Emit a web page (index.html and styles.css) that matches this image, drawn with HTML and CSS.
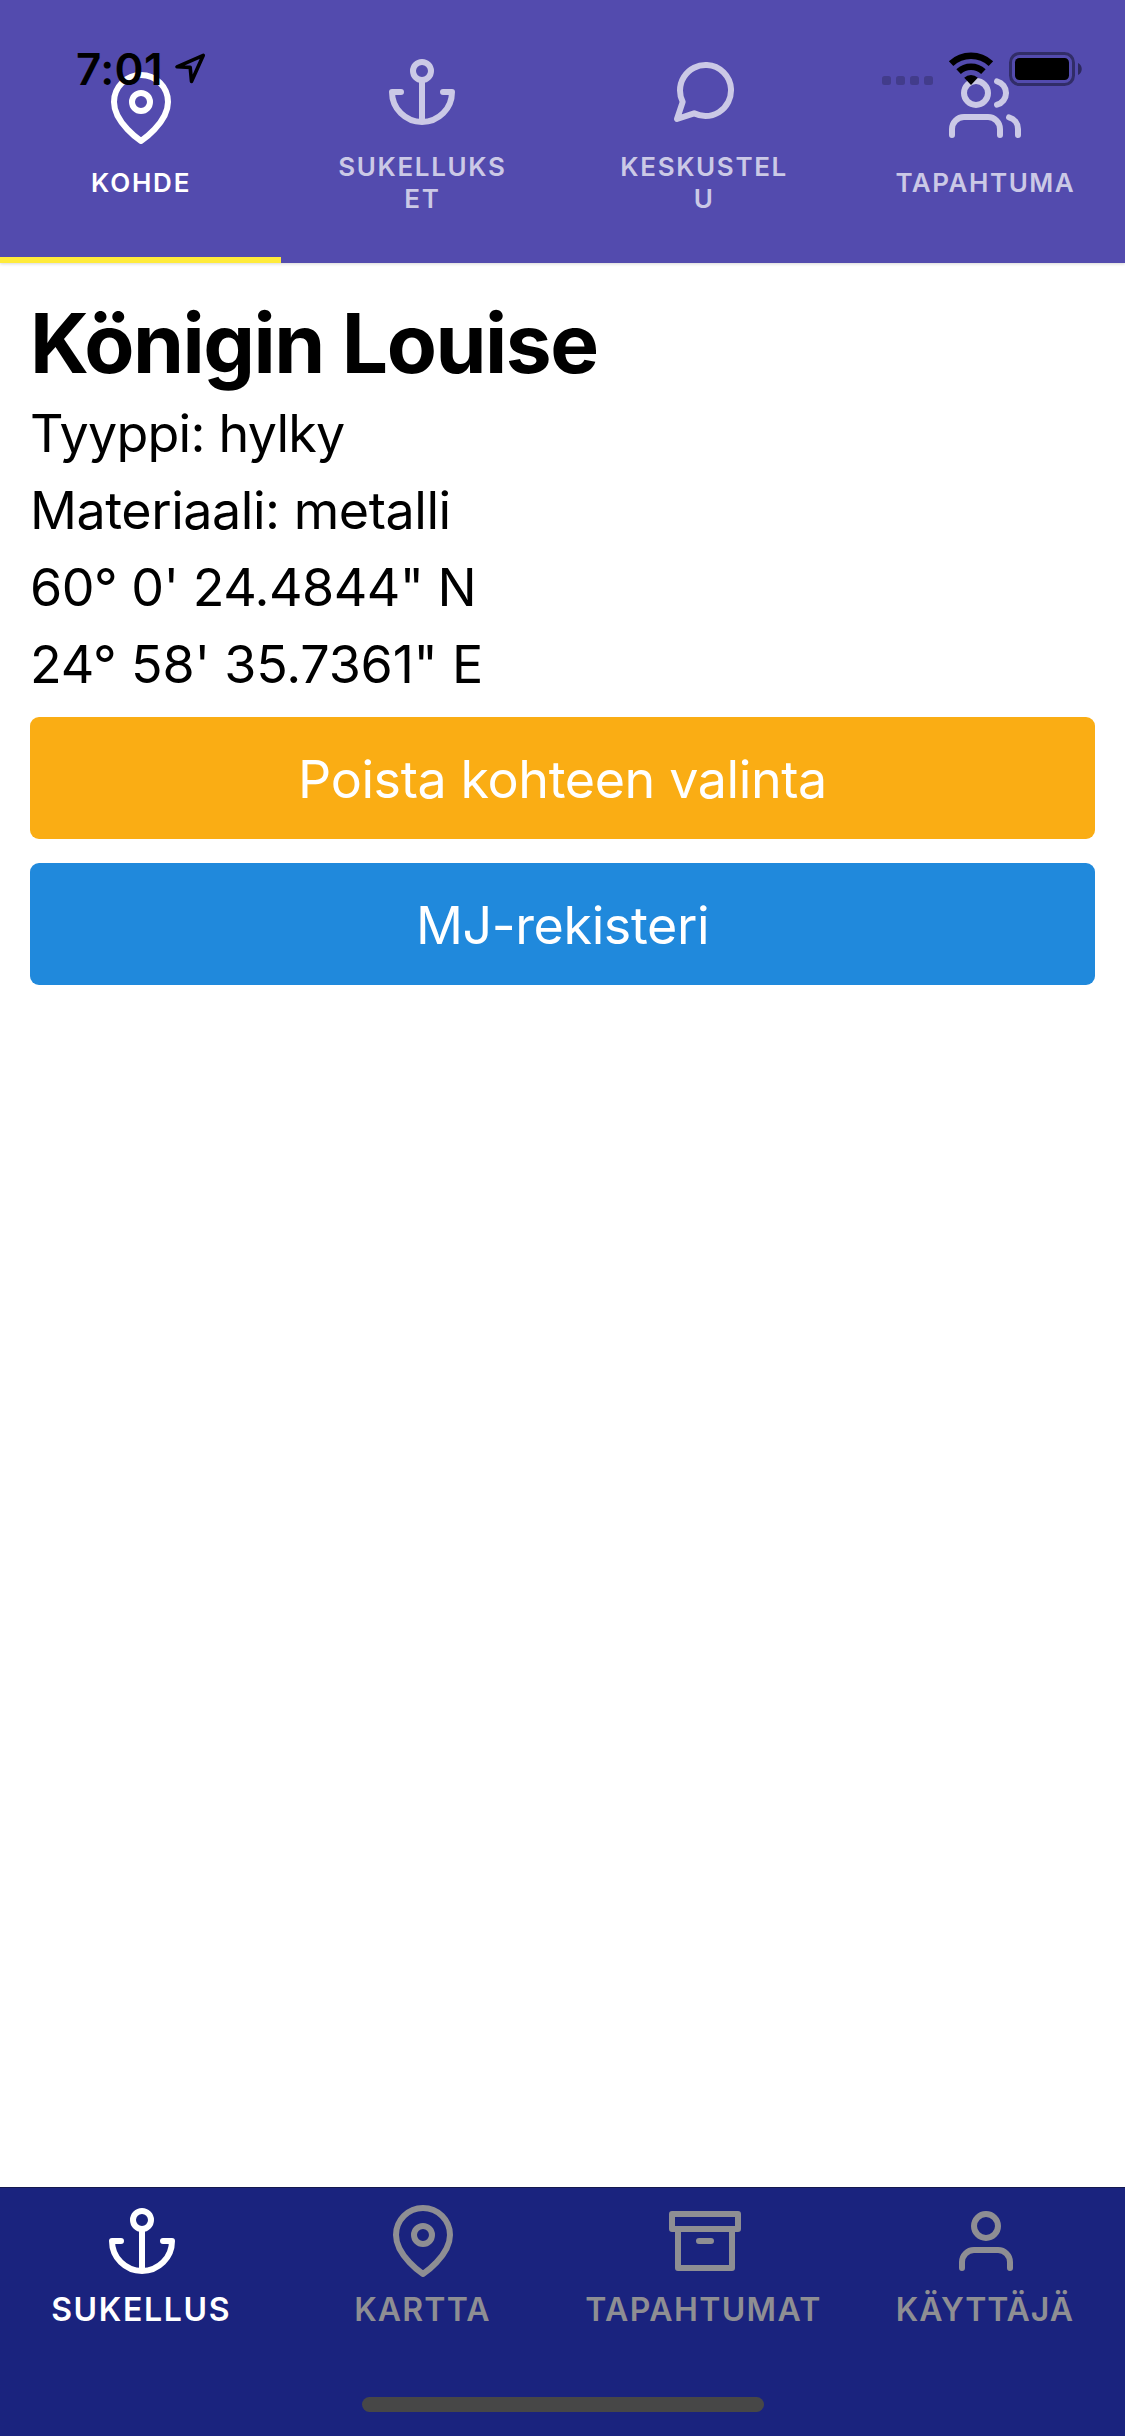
FILE: index.html
```html
<!DOCTYPE html>
<html lang="fi">
<head>
<meta charset="utf-8">
<title>Königin Louise</title>
<link rel="stylesheet" href="styles.css">
</head>
<body>
<svg class="sprite" aria-hidden="true">
  <symbol id="pin" viewBox="0 0 24 24"><path d="M21 10c0 7-9 13-9 13s-9-6-9-13a9 9 0 0 1 18 0z"/><circle cx="12" cy="10" r="3"/></symbol>
  <symbol id="anchor" viewBox="0 0 24 24"><circle cx="12" cy="5" r="3"/><path d="M12 22V8M5 12H2a10 10 0 0 0 20 0h-3"/></symbol>
  <symbol id="chat" viewBox="0 0 24 24"><path d="M21 11.5a8.38 8.38 0 0 1-.9 3.8 8.5 8.5 0 0 1-7.6 4.7 8.38 8.38 0 0 1-3.8-.9L3 21l1.9-5.7a8.38 8.38 0 0 1-.9-3.8 8.5 8.5 0 0 1 4.7-7.6 8.38 8.38 0 0 1 3.8-.9h.5a8.48 8.48 0 0 1 8 8v.5z"/></symbol>
  <symbol id="users" viewBox="0 0 24 24"><path d="M17 21v-2a4 4 0 0 0-4-4H5a4 4 0 0 0-4 4v2"/><circle cx="9" cy="7" r="4"/><path d="M23 21v-2a4 4 0 0 0-3-3.87M16 3.13a4 4 0 0 1 0 7.75"/></symbol>
  <symbol id="archive" viewBox="0 0 24 24"><path d="M21 8v13H3V8M1 3h22v5H1zM10 12h4"/></symbol>
  <symbol id="user" viewBox="0 0 24 24"><path d="M20 21v-2a4 4 0 0 0-4-4H8a4 4 0 0 0-4 4v2"/><circle cx="12" cy="7" r="4"/></symbol>
</svg>

<div class="app">
  <header class="top-tabs">
    <a class="top-tab active"><svg class="icon"><use href="#pin"/></svg><span class="top-label ls-kohde">KOHDE</span></a>
    <a class="top-tab"><svg class="icon"><use href="#anchor"/></svg><span class="top-label">SUKELLUKSET</span></a>
    <a class="top-tab"><svg class="icon"><use href="#chat"/></svg><span class="top-label">KESKUSTELU</span></a>
    <a class="top-tab"><svg class="icon"><use href="#users"/></svg><span class="top-label ls-event">TAPAHTUMA</span></a>
    <div class="status-bar">
      <span class="clock">7:01</span>
      <svg class="location" viewBox="0 0 32 32"><path d="M29.3 3.3 3 14.8 16.2 15.4 17.5 29.4z"/></svg>
      <span class="signal"><i></i><i></i><i></i><i></i></span>
      <svg class="wifi" viewBox="0 0 46 34"><path class="arc" d="M3.1 11.6A29.2 29.2 0 0 1 42.9 11.6M10.6 19.7A18.2 18.2 0 0 1 35.4 19.7"/><path d="M16.2 25.7A10 10 0 0 1 29.8 25.7L23 33z"/></svg>
      <svg class="battery" viewBox="0 0 74 34"><rect class="shell" x="1.5" y="1.5" width="63" height="31" rx="9"/><rect x="6" y="6" width="54" height="22" rx="4.5"/><path class="nub" d="M69 11c5 2 5 10 0 12z"/></svg>
    </div>
  </header>

  <main class="content">
    <h1 class="title">Königin Louise</h1>
    <p class="line ls-type">Tyyppi: hylky</p>
    <p class="line ls-material">Materiaali: metalli</p>
    <p class="line ls-lat">60° 0' 24.4844" N</p>
    <p class="line ls-lon">24° 58' 35.7361" E</p>
    <div class="buttons">
      <button class="button warning">Poista kohteen valinta</button>
      <button class="button primary">MJ-rekisteri</button>
    </div>
  </main>

  <nav class="bottom-nav">
    <a class="nav-item active"><svg class="icon"><use href="#anchor"/></svg><span class="nav-label ls-dive">SUKELLUS</span></a>
    <a class="nav-item"><svg class="icon"><use href="#pin"/></svg><span class="nav-label ls-map">KARTTA</span></a>
    <a class="nav-item"><svg class="icon"><use href="#archive"/></svg><span class="nav-label ls-events">TAPAHTUMAT</span></a>
    <a class="nav-item"><svg class="icon"><use href="#user"/></svg><span class="nav-label ls-user">KÄYTTÄJÄ</span></a>
    <div class="home-indicator"></div>
  </nav>
</div>
</body>
</html>
```

FILE: styles.css
```css
* { box-sizing: border-box; }

body {
  margin: 0;
  background: #fff;
  color: #000;
  font-family: Inter, "Liberation Sans", sans-serif;
}

.sprite { position: absolute; width: 0; height: 0; }

.app {
  display: flex;
  flex-direction: column;
  height: 2436px;
}

.icon {
  display: block;
  width: 72px;
  height: 72px;
  fill: none;
  stroke: currentColor;
  stroke-width: 2;
  stroke-linecap: round;
  stroke-linejoin: round;
}

/* Top tabs */
.top-tabs {
  position: relative;
  display: grid;
  grid-template-columns: repeat(4, 1fr);
  height: 263px;
  background: #534bae;
  box-shadow: 0 1px 3px rgba(0, 0, 0, 0.16);
}

.top-tab {
  position: relative;
  display: flex;
  flex-direction: column;
  align-items: center;
  justify-content: center;
  gap: 23px;
  padding: 8px 0 0 1px;
  color: #cbc9e6;
}

.top-tab:nth-child(n + 3) { padding-left: 2px; }

.top-tab.active { color: #fff; }

.top-tab.active::after {
  content: "";
  position: absolute;
  left: 0;
  right: 0;
  bottom: 0;
  height: 6px;
  background: #ffeb3b;
}

.top-label {
  width: 182px;
  font-size: 26px;
  font-weight: 600;
  line-height: 32px;
  letter-spacing: 1.63px;
  text-align: center;
  word-break: break-all;
}

/* Status bar, drawn over the tabs */
.status-bar {
  position: absolute;
  top: 52px;
  left: 76px;
  right: 42px;
  display: flex;
  align-items: flex-start;
  height: 34px;
}

.clock {
  width: 98px;
  margin-top: -9px;
  font-size: 44px;
  font-weight: 600;
  line-height: 53px;
  letter-spacing: 0.36px;
}

.location {
  width: 32px;
  height: 32px;
  margin-right: auto;
  fill: none;
  stroke: #000;
  stroke-width: 3.6;
  stroke-linejoin: round;
}

.signal {
  display: flex;
  gap: 5px;
  margin: 24px 15px 0 0;
}

.signal i {
  width: 9px;
  height: 9px;
  border-radius: 2.5px;
  background: rgba(0, 0, 0, 0.2);
}

.wifi { width: 46px; height: 34px; margin-right: 15px; }
.wifi .arc { fill: none; stroke: #000; stroke-width: 6.6; }

.battery { width: 74px; height: 34px; }
.battery .shell { fill: none; stroke: #000; stroke-width: 3; opacity: 0.4; }
.battery .nub { opacity: 0.45; }

/* Content */
.content {
  flex: 1;
  padding: 30px;
}

.title {
  margin: 0;
  font-size: 82px;
  font-weight: 700;
  line-height: 102px;
  letter-spacing: -1.5px;
}

.line {
  margin: 0;
  font-size: 52px;
  line-height: 77px;
}

.buttons {
  display: flex;
  flex-direction: column;
  gap: 24px;
  margin-top: 14px;
}

.button {
  height: 122px;
  padding: 3px 0 0;
  border: 0;
  border-radius: 9px;
  color: #fff;
  font: 400 52px/77px Inter, "Liberation Sans", sans-serif;
  letter-spacing: -0.4px;
}

.warning { background: #faad14; }
.primary { background: #2089dc; }

/* Bottom navigation */
.bottom-nav {
  position: relative;
  display: grid;
  grid-template-columns: repeat(4, 1fr);
  height: 249px;
  padding-top: 17px;
  border-top: 1px solid #14194f;
  background: #1a237e;
}

.nav-item {
  display: flex;
  flex-direction: column;
  align-items: center;
  gap: 13px;
  padding-left: 1px;
  color: #8e8e93;
}

.nav-item .icon { margin-left: 2px; }

.nav-item.active { color: #fff; }

.nav-label {
  font-size: 32px;
  font-weight: 600;
  line-height: 39px;
}

.home-indicator {
  position: absolute;
  left: 362px;
  bottom: 24px;
  width: 402px;
  height: 15px;
  border-radius: 8px;
  background: #474747;
}

/* Per-text tracking */
.ls-kohde { letter-spacing: 1.79px; }
.ls-event { letter-spacing: 1.55px; }
.ls-type { letter-spacing: -0.77px; }
.ls-material { letter-spacing: -0.45px; }
.ls-lat { letter-spacing: -0.52px; }
.ls-lon { letter-spacing: -0.19px; }
.ls-dive { letter-spacing: 1.65px; }
.ls-map { letter-spacing: 1.18px; }
.ls-events { letter-spacing: 1.39px; }
.ls-user { letter-spacing: 0.97px; }
```
